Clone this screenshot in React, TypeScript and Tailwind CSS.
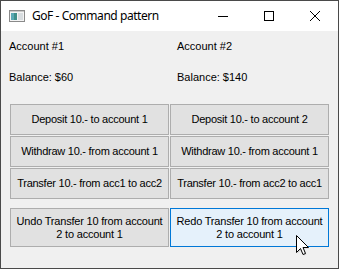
import React from "react";

const btn =
  "h-[31px] bg-[#e1e1e1] border border-[#adadad] text-[11px] leading-[13px] tracking-[-0.25px] text-black flex items-center justify-center";

function Cursor() {
  return (
    <svg className="absolute left-[296px] top-[235px]" width="14" height="22" viewBox="0 0 14 22">
      <path
        d="M1.5 1.5 L1.5 18.5 L5.5 14.5 L8 20.5 L10.5 19.5 L8 13.5 L13 13.5 Z"
        fill="#9a9a9a"
        opacity="0.35"
      />
      <path
        d="M0.5 0.5 L0.5 17.5 L4.5 13.5 L7 19.5 L9.5 18.5 L7 12.5 L12.5 12.5 Z"
        fill="#ffffff"
        stroke="#000000"
        strokeWidth="1"
        strokeLinejoin="miter"
      />
    </svg>
  );
}

export default function App() {
  const sans = { fontFamily: '"Liberation Sans", Arial, sans-serif' };

  return (
    <div className="w-[339px] h-[270px] bg-white relative" style={sans}>
      <div className="w-[339px] h-[269px] border border-[#4a4a4a] flex flex-col">
        {/* Title bar */}
        <div className="h-[30px] bg-white flex items-center">
          <svg className="ml-[8px]" width="16" height="16" viewBox="0 0 16 16">
            <rect x="0.5" y="2.5" width="15" height="11" fill="#f4f4f4" stroke="#8a8a8a" />
            <rect x="2" y="5" width="6" height="7" fill="#3f8f8a" />
            <rect x="2" y="5" width="3" height="7" fill="#5aa9b5" />
            <rect x="9" y="5" width="5" height="7" fill="#d8dde0" />
            <rect x="1" y="3" width="14" height="1" fill="#c9c9c9" />
          </svg>
          <div
            className="ml-[7px] text-[12px] tracking-[-0.45px] text-black"
            style={{ fontFamily: '"Noto Sans", "Open Sans", sans-serif' }}
          >
            GoF - Command pattern
          </div>
          <div className="ml-auto flex h-[30px]">
            <div className="w-[46px] h-[30px] flex items-center justify-center">
              <div className="w-[10px] h-[1px] bg-black" />
            </div>
            <div className="w-[46px] h-[30px] flex items-center justify-center">
              <div className="w-[10px] h-[10px] border border-black" />
            </div>
            <div className="w-[46px] h-[30px] flex items-center justify-center">
              <svg width="10" height="10" viewBox="0 0 10 10">
                <path d="M0 0 L10 10 M10 0 L0 10" stroke="#000" strokeWidth="1" />
              </svg>
            </div>
          </div>
        </div>

        {/* Body */}
        <div className="flex-1 bg-[#f0f0f0] pl-[8px] pt-[9px] text-[11px] leading-[13px] text-black">
          <div className="flex">
            <div className="w-[168px]">Account #1</div>
            <div>Account #2</div>
          </div>
          <div className="flex mt-[18px]">
            <div className="w-[168px]">Balance: $60</div>
            <div>Balance: $140</div>
          </div>

          <div className="ml-[1px] mt-[20px] grid grid-cols-[159px_159px] gap-[1px]">
            <div className={btn}>Deposit 10.- to account 1</div>
            <div className={btn}>Deposit 10.- to account 2</div>
            <div className={btn}>Withdraw 10.- from account 1</div>
            <div className={btn}>Withdraw 10.- from account 1</div>
            <div className={btn}>Transfer 10.- from acc1 to acc2</div>
            <div className={btn}>Transfer 10.- from acc2 to acc1</div>
          </div>

          <div className="ml-[1px] mt-[9px] grid grid-cols-[159px_159px] gap-[1px]">
            <div className="h-[39px] bg-[#e1e1e1] border border-[#adadad] flex items-center justify-center text-center tracking-[-0.2px]">
              Undo Transfer 10 from account
              <br />
              2 to account 1
            </div>
            <div className="h-[39px] bg-[#e5f1fb] border border-[#0078d7] flex items-center justify-center text-center tracking-[-0.2px]">
              Redo Transfer 10 from account
              <br />
              2 to account 1
            </div>
          </div>
        </div>
      </div>
      <Cursor />
    </div>
  );
}
